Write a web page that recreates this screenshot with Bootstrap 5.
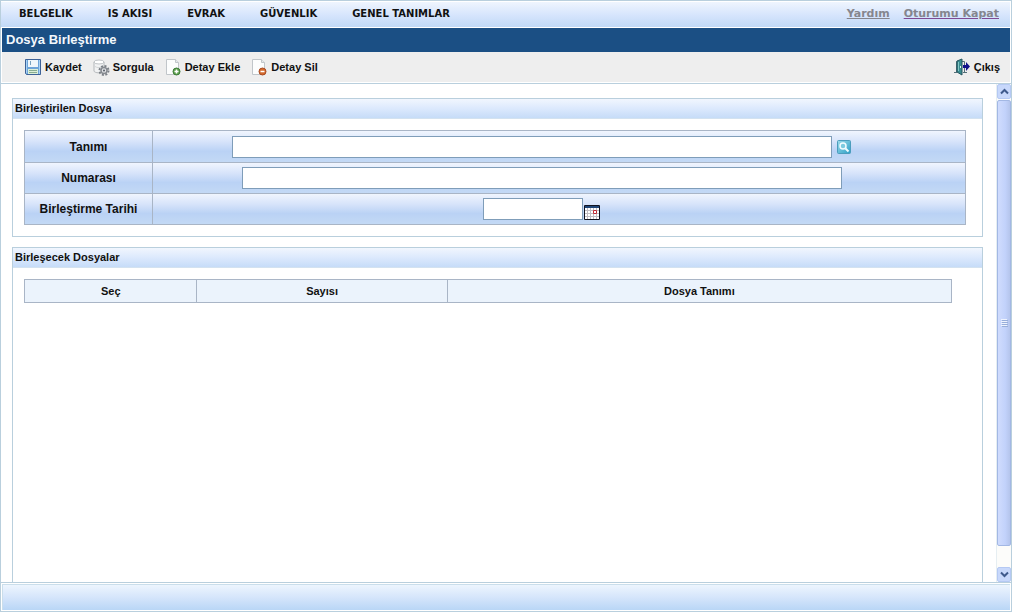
<!DOCTYPE html>
<html lang="tr">
<head>
<meta charset="utf-8">
<meta name="viewport" content="width=device-width, initial-scale=1">
<title>Dosya Birleştirme</title>
<link href="https://cdn.jsdelivr.net/npm/bootstrap@5.3.0/dist/css/bootstrap.min.css" rel="stylesheet">
<style>
  :root { --edge: #b9cfdd; --cell-edge: #a9b5c6; }
  body { font-family: "Liberation Sans", Arial, sans-serif; font-size: 11px; line-height: 14px; font-weight: 700; color: #111; background: #fff; }
  .app { padding-right: 2px; }
  .frame { border: 1px solid var(--edge); border-bottom: 0; }
  .menu-bar { height: 27px; padding: 0 11px 2px 18px; border: solid #fff; border-width: 1px 1px 1px 0; background: linear-gradient(#eff5fe, #d5e4fc 55%, #c1d9f6); font-family: "DejaVu Sans", Verdana, sans-serif; }
  .menu-bar .nav { gap: 35px; }
  .menu-bar .nav-link { padding: 0; color: #111; font-size: 10px; }
  .session { gap: 14px; }
  .session a { color: #85868e; }
  .session a:last-child { text-decoration-color: #7d4a94; }
  .title-bar { height: 24px; padding: 0 4px; margin: 0 1px; background: #1b4f84; color: #f4f8fc; font-size: 13px; line-height: 24px; font-weight: 700; }
  .tool-bar { height: 31px; padding: 0 10px 0 23px; margin: 0 1px; background: #eee; border-bottom: 1px solid #fff; gap: 11px; }
  .tool { display: flex; align-items: center; gap: 3px; padding: 0; border: 0; background: none; color: #111; font-weight: 700; }
  .work { border-top: 1px solid var(--edge); min-height: 0; }
  .pane { padding: 14px 13px 0 11px; gap: 10px; min-width: 0; }
  .group { border: 1px solid var(--edge); }
  .group h2 { height: 20px; margin: 0; padding: 0 2px; font-size: 11px; line-height: 18px; font-weight: 700; background: linear-gradient(#f1f6fe, #dce9fd 50%, #c6dcf8); border-bottom: 1px solid #d3e2f0; }
  .fields { margin: 11px 16px 11px 11px; border: 1px solid var(--cell-edge); }
  .field-row { height: 31px; background: linear-gradient(#f0f5fe, #d6e3fa 35%, #bad2f5 65%, #c3d9f5); }
  .field-row + .field-row { border-top: 1px solid var(--cell-edge); }
  .field-row > label { width: 128px; border-right: 1px solid var(--cell-edge); font-size: 12px; }
  .field-box { padding: 0 35px 0 0; min-width: 0; }
  .field-box .form-control { width: 600px; height: 22px; min-height: 0; padding: 0 3px; border: 1px solid #7f9db9; border-radius: 0; font-size: 11px; }
  .field-box .date { width: 100px; }
  .icon-btn { padding: 0; border: 0; background: none; display: flex; }
  .files { margin: 11px 30px 0 11px; width: auto; }
  .files table { width: 100%; table-layout: fixed; }
  .files th { height: 23px; padding: 0; text-align: center; vertical-align: middle; background: #ebf3fc; border: 1px solid var(--cell-edge); }
  .scroll { width: 15px; background: #fcfcfa; border-left: 1px solid #e6eef2; }
  .scroll button { height: 15px; padding: 0; border: 1px solid #b5c9f3; border-radius: 2px; background: #c8d8fb; display: flex; align-items: center; justify-content: center; }
  .thumb { margin: 1px 0 21px; border: 1px solid #a3b8e4; border-radius: 2px; background: linear-gradient(90deg, #d0dcfd, #c2d2fb 60%, #b5c5ec); }
  .status { height: 30px; border: 1px solid var(--edge); padding: 1px; }
  .status div { background: linear-gradient(#edf5fe, #d5e5fb 50%, #b9d6f6); border: solid #cadeeb; border-width: 1px 0 0 1px; }
</style>
</head>
<body>
<div class="app d-flex flex-column vh-100 overflow-hidden">
  <div class="frame d-flex flex-column flex-grow-1 overflow-hidden">
    <header class="menu-bar d-flex align-items-center justify-content-between flex-shrink-0">
      <nav class="nav flex-nowrap text-nowrap">
        <a class="nav-link" href="#">BELGELIK</a>
        <a class="nav-link" href="#">IS AKISI</a>
        <a class="nav-link" href="#">EVRAK</a>
        <a class="nav-link" href="#">GÜVENLIK</a>
        <a class="nav-link" href="#">GENEL TANIMLAR</a>
      </nav>
      <div class="session d-flex text-nowrap">
        <a href="#">Yardım</a>
        <a href="#">Oturumu Kapat</a>
      </div>
    </header>
    <h1 class="title-bar flex-shrink-0">Dosya Birleştirme</h1>
    <div class="tool-bar d-flex align-items-center flex-shrink-0">
      <button class="tool" type="button">
        <svg width="17" height="17" viewBox="0 0 17 17"><path d="M.5.500h15v15h-14l-1-1z" fill="#6ea4d8" stroke="#3d6297"/><path d="M3 1h10v7H3z" fill="#eff6fb"/><path d="M5 2h1v4H5z" fill="#79a2bf"/><path d="M3 10h10v5H3z" fill="#dcefd8"/><path d="M4 11.500h8M4 13.500h8" stroke="#88ac91"/><path d="M1.500 1v13M14.500 1v14" stroke="#a8d2f5"/></svg>
        Kaydet</button>
      <button class="tool" type="button">
        <svg width="17" height="17" viewBox="0 0 17 17"><path d="M1 3v9c0 2 9 3 10 0V3" fill="#f2f3f4" stroke="#b4b8bb"/><ellipse cx="6" cy="3" rx="5" ry="2" fill="#fff" stroke="#bfc3c6"/><path d="M2 7.500c2 1.500 6 1.500 8 0" fill="none" stroke="#d2d5d6"/><circle cx="11" cy="11.500" r="4.500" fill="none" stroke="#7b8087" stroke-width="2" stroke-dasharray="2 1.530"/><circle cx="11" cy="11.500" r="3" fill="#dfe1e4" stroke="#868a90" stroke-width="1.500"/><circle cx="11" cy="11.500" r="1" fill="#555b64"/></svg>
        Sorgula</button>
      <button class="tool" type="button">
        <svg width="17" height="17" viewBox="0 0 17 17"><path d="M1.500.5h9l3 3v12h-12z" fill="#fcfdfd" stroke="#c1c6ca"/><path d="M10.500.5v3h3" fill="#e6eaec" stroke="#c1c6ca"/><circle cx="11.500" cy="12.500" r="3.500" fill="#5d9f4c" stroke="#3c7b37"/><path d="M11.500 10.500v4M9.500 12.500h4" stroke="#fff" stroke-width="1.500"/></svg>
        Detay Ekle</button>
      <button class="tool" type="button">
        <svg width="17" height="17" viewBox="0 0 17 17"><path d="M1.500.5h9l3 3v12h-12z" fill="#fcfdfd" stroke="#c1c6ca"/><path d="M10.500.5v3h3" fill="#e6eaec" stroke="#c1c6ca"/><circle cx="11.500" cy="12.500" r="3.500" fill="#d46a2d" stroke="#a84a22"/><path d="M9.500 12.500h4" stroke="#fff" stroke-width="1.500"/></svg>
        Detay Sil</button>
      <button class="tool ms-auto" type="button">
        <svg width="17" height="18" viewBox="0 0 17 18"><path d="M2.500 14V3.500h8V14M0 14.500h3M9 14.500h4" fill="none" stroke="#546f78"/><path d="M3 3l5-2v16l-5-3z" fill="#398c90" stroke="#24545f"/><path d="M4.500 4v9" stroke="#83c7c5"/><path d="M6.500 8v2" stroke="#eef7f7"/><path d="M9 7h3V4l4 4.500-4 4.500v-3H9z" fill="#12128b"/></svg>
        Çıkış</button>
    </div>

    <div class="work d-flex flex-grow-1">
      <main class="pane d-flex flex-column flex-grow-1">
        <section class="group">
          <h2>Birleştirilen Dosya</h2>
          <form class="fields">
            <div class="field-row d-flex">
              <label for="tanim" class="d-flex align-items-center justify-content-center flex-shrink-0">Tanımı</label>
              <div class="field-box d-flex align-items-center justify-content-center flex-grow-1">
                <input id="tanim" type="text" class="form-control me-1">
                <button class="icon-btn" type="button" aria-label="Ara">
                  <svg width="16" height="16" viewBox="0 0 16 16"><defs><linearGradient id="aqua" x2="1" y2="1"><stop stop-color="#9ddceb"/><stop offset="1" stop-color="#2d9fc6"/></linearGradient></defs><rect x="1.500" y="1.500" width="13" height="13" rx="1" fill="url(#aqua)" stroke="#4b9dbd"/><circle cx="7" cy="7" r="3" fill="#7ccbe0" stroke="#f1fcff" stroke-width="1.500"/><path d="M9.500 9.500l3 3" stroke="#f1fcff" stroke-width="2"/></svg>
                </button>
              </div>
            </div>
            <div class="field-row d-flex">
              <label for="numara" class="d-flex align-items-center justify-content-center flex-shrink-0">Numarası</label>
              <div class="field-box d-flex align-items-center justify-content-center flex-grow-1">
                <input id="numara" type="text" class="form-control">
              </div>
            </div>
            <div class="field-row d-flex">
              <label for="tarih" class="d-flex align-items-center justify-content-center flex-shrink-0">Birleştirme Tarihi</label>
              <div class="field-box d-flex align-items-center justify-content-center flex-grow-1">
                <input id="tarih" type="text" class="form-control date">
                <button class="icon-btn align-self-end mb-1 ps-0" type="button" aria-label="Takvim">
                  <svg width="18" height="15" viewBox="0 0 18 15"><path d="M1.500.5h15v14h-15z" fill="#fff" stroke="#101320"/><path d="M2 1h14v2H2z" fill="#1f4577"/><path d="M4.500 3v11M7.500 3v11M10.500 3v11M13.500 3v11M2 5.500h14M2 8.500h14M2 11.500h14" stroke="#c0bdc4"/><path d="M10.500 5.500h3v3h-3z" fill="#fff" stroke="#c02b36"/></svg>
                </button>
              </div>
            </div>
          </form>
        </section>

        <section class="group border-bottom-0 flex-grow-1">
          <h2>Birleşecek Dosyalar</h2>
          <div class="files">
            <table>
              <colgroup><col style="width:18.6%"><col style="width:27%"><col></colgroup>
              <thead><tr><th scope="col">Seç</th><th scope="col">Sayısı</th><th scope="col">Dosya Tanımı</th></tr></thead>
            </table>
          </div>
        </section>
      </main>

      <div class="scroll d-flex flex-column flex-shrink-0">
        <button type="button" aria-label="Yukarı"><svg width="9" height="7" viewBox="0 0 9 7"><path d="M1 5.500l3.500-3.500L8 5.500" fill="none" stroke="#3f5a8c" stroke-width="2"/></svg></button>
        <div class="thumb d-flex align-items-center justify-content-center flex-grow-1">
          <svg width="7" height="8" viewBox="0 0 7 8"><path d="M0 .5h6M0 2.500h6M0 4.500h6M0 6.500h6" stroke="#eef3fe"/><path d="M1 1.500h6M1 3.500h6M1 5.500h6M1 7.500h6" stroke="#98aeda"/></svg>
        </div>
        <button type="button" aria-label="Aşağı"><svg width="9" height="7" viewBox="0 0 9 7"><path d="M1 1.500L4.500 5 8 1.500" fill="none" stroke="#3f5a8c" stroke-width="2"/></svg></button>
      </div>
    </div>
  </div>
  <footer class="status flex-shrink-0"><div class="h-100"></div></footer>
</div>
<script src="https://cdn.jsdelivr.net/npm/bootstrap@5.3.0/dist/js/bootstrap.bundle.min.js"></script>
</body>
</html>
